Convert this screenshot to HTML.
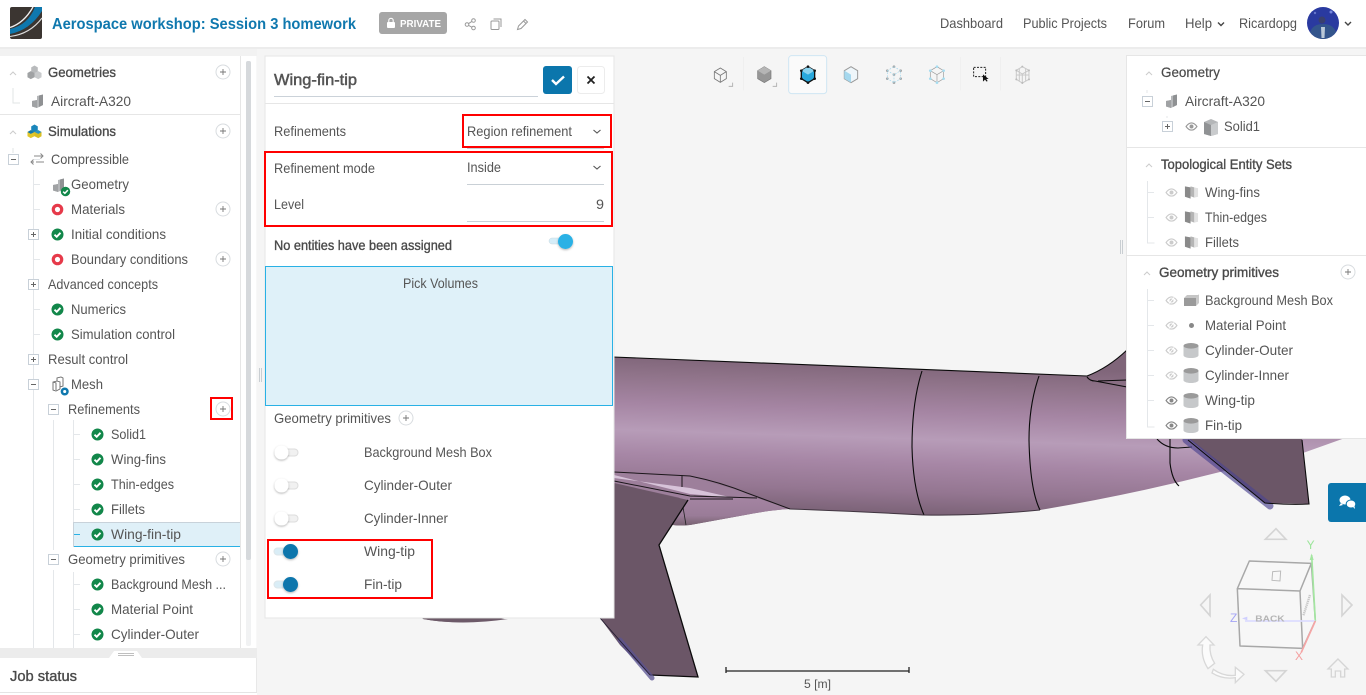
<!DOCTYPE html>
<html lang="en"><head><meta charset="utf-8"><title>Aerospace workshop: Session 3 homework</title>
<style>
html,body{margin:0;padding:0;width:1366px;height:695px;overflow:hidden;background:#f5f5f5}
svg{display:block}
text{font-family:"Liberation Sans",sans-serif;font-size:14px;fill:#555}
.b{font-weight:bold}
.d{fill:#4a4a4a}
.s{fill:#4a4a4a;stroke:#4a4a4a;stroke-width:.35px}
</style></head><body>
<svg xmlns="http://www.w3.org/2000/svg" width="1366" height="695" viewBox="0 0 1366 695">
<defs>
<linearGradient id="fus" gradientUnits="userSpaceOnUse" x1="860" y1="362" x2="855" y2="522">
<stop offset="0" stop-color="#7f6579"/><stop offset=".12" stop-color="#8f7389"/><stop offset=".3" stop-color="#a585a3"/><stop offset=".47" stop-color="#b79cb8"/><stop offset=".62" stop-color="#a787a6"/><stop offset=".8" stop-color="#947691"/><stop offset=".93" stop-color="#7d6479"/><stop offset="1" stop-color="#54434f"/>
</linearGradient>
<linearGradient id="und" gradientUnits="userSpaceOnUse" x1="730" y1="496" x2="730" y2="526">
<stop offset="0" stop-color="#a585a3"/><stop offset=".65" stop-color="#9a7c98"/><stop offset="1" stop-color="#75606f"/>
</linearGradient>
<symbol id="ok" viewBox="0 0 14 14" overflow="visible"><circle cx="7" cy="7" r="6" fill="#12874a"/><path d="M4 7.200l2.200 2.100L10 5.300" fill="none" stroke="#fff" stroke-width="1.900"/></symbol>
<symbol id="ring" viewBox="0 0 14 14"><circle cx="7" cy="7" r="4.200" fill="none" stroke="#e63a4a" stroke-width="3.200"/></symbol>
<symbol id="pl" viewBox="0 0 16 16"><circle cx="8" cy="8" r="7" fill="#fff" stroke="#d8dcdf"/><path d="M5 8h6M8 5v6" stroke="#777" stroke-width=".9"/></symbol>
<symbol id="ep" viewBox="0 0 11 11"><rect x=".5" y=".5" width="10" height="10" fill="#fff" stroke="#c8d0d8"/><path d="M3 5.500h5M5.500 3v5" stroke="#666"/></symbol>
<symbol id="em" viewBox="0 0 11 11"><rect x=".5" y=".5" width="10" height="10" fill="#fff" stroke="#c8d0d8"/><path d="M3 5.500h5" stroke="#666"/></symbol>
<symbol id="eye" viewBox="0 0 14 10"><path d="M1 5C3 2 5 1 7 1s4 1 6 4c-2 3-4 4-6 4S3 8 1 5z" fill="none" stroke="currentColor" stroke-width="1.300"/><circle cx="7" cy="5" r="2.200" fill="currentColor"/></symbol>
<symbol id="eyex" viewBox="0 0 14 10"><path d="M1 5C3 2 5 1 7 1s4 1 6 4c-2 3-4 4-6 4S3 8 1 5z" fill="none" stroke="#ccc" stroke-width="1.300"/><circle cx="7" cy="5" r="2.200" fill="#ccc"/><path d="M4 8.500L10 1.500" stroke="#fff" stroke-width="1"/></symbol>
<symbol id="cyl" viewBox="0 0 16 16"><path d="M0 3v10c0 1.700 3.600 3 8 3s8-1.300 8-3V3z" fill="#c6c8ca"/><ellipse cx="8" cy="3" rx="8" ry="3" fill="#9a9a9a"/></symbol>
<symbol id="part" viewBox="0 0 14 14"><path d="M6 2l6-1.500V11l-6 3-5-1.500V7l5-1z" fill="#b5b7b9"/><path d="M8 1.500l4-1V11l-4 2z" fill="#8f9193"/><path d="M1 7l5-1v8l-5-1.500z" fill="#a0a2a4"/></symbol>
<symbol id="faces" viewBox="0 0 16 14"><path d="M1 1l6 1v12l-6-2z" fill="#8a8a8a"/><path d="M7 1l4 1v11l-4-1.500z" fill="#b5b5b5"/><path d="M11 2l4 1v9l-4 1z" fill="#e2e2e2"/></symbol>
<symbol id="cubes" viewBox="0 0 16 16"><path d="M4.500 2.500L8 .5l3.500 2V7L8 9 4.500 7z" fill="#b8babc"/><path d="M.5 8.500L4 6.500l4 2V13l-4 2-3.500-2z" fill="#a0a2a4"/><path d="M8 8.500l4-2 3.500 2V13L12 15l-4-2z" fill="#c8cacc"/></symbol>
<symbol id="cubesc" viewBox="0 0 16 16"><path d="M4.500 2.500L8 .5l3.500 2V7L8 9 4.500 7z" fill="#1a86bb"/><path d="M.5 8.500L4 6.500l4 2V13l-4 2-3.500-2z" fill="#e2c62a"/><path d="M8 8.500l4-2 3.500 2V13L12 15l-4-2z" fill="#d9bf22"/><path d="M.5 8.500L4 10.500l4-2-4-2z" fill="#0f78ae"/><path d="M8 8.500l4 2 3.500-2-3.500-2z" fill="#2a94c6"/></symbol>
<filter id="sh" x="-50%" y="-50%" width="200%" height="200%"><feDropShadow dx="0" dy="1" stdDeviation="1" flood-color="#000" flood-opacity=".3"/></filter>
<filter id="bl" x="-5%" y="-5%" width="110%" height="110%"><feGaussianBlur stdDeviation=".35"/></filter>
</defs>

<!-- viewport -->
<rect width="1366" height="695" fill="#f5f5f5"/>

<!-- aircraft -->
<g>
<path d="M400 356L613 357L1087 376Q1108 368 1127 350L1345 345V438L1303 453L1220 472Q1130 495 1040 510Q980 516 923 515Q850 511 790 509Q770 510 745 515L690 525Q680 526 673 525L620 520L600 618H508Q460 626 423 619L400 600Z" fill="url(#fus)"/>
<path d="M680 495L757 498L790 509Q770 510 745 515L690 525Q680 526 673 525Z" fill="url(#und)"/>
<g fill="none" stroke="#0a0a0a" stroke-width="1.100">
<path d="M613 357L1087 376Q1108 368 1127 350"/>
<path d="M922 371Q912 402 912 447Q913 490 924 515"/>
<path d="M1039 376Q1029 405 1029 440Q1030 490 1040 510"/>
<path d="M1087 377Q1090 381 1095 381L1127 387M1098 381L1127 380"/>
<path d="M1170 438V463Q1172 480 1179 486"/>
<path d="M1157 439Q1165 448 1178 448L1192 447"/>
</g>
<path d="M790 509Q850 511 923 515Q980 516 1040 510" fill="none" stroke="#403540" stroke-width="1"/>
<path d="M423 619Q460 626 508 619" fill="#6d5a69"/>
<!-- wing fairing -->
<path d="M614 472L682 475L690 476L747 493L790 509L760 498L694 495L690 500L614 483Z" fill="#9d7f9b"/>
<path d="M614 475L690 494L734 498L690 488L614 478Z" fill="#d7c3d9"/>
<path d="M614 472L690 476Q720 482 747 493L790 509M682 475V487M614 481L690 496L757 498M690 499H733" fill="none" stroke="#1b161a" stroke-width="1"/>
<path d="M683 507L686 525" stroke="#222" stroke-width=".8"/>
<!-- main wing -->
<path d="M614 483L688 500L659 545L698 677L650 675L620 645L600 618V480Z" fill="#6b5667"/>
<path d="M688 500L659 545L698 677L650 675" fill="none" stroke="#0b0a0b" stroke-width="1.300"/>
<path d="M620 640L652 678" stroke="#5a5392" stroke-width="5" stroke-linecap="round" opacity=".75"/>
<path d="M600 618L650 675" stroke="#1f1a2e" stroke-width=".8"/>
<!-- tail fin -->
<path d="M1188 438L1265 503L1309 504L1302 438Z" fill="#6b5667"/>
<path d="M1186 440L1270 506" stroke="#4c4490" stroke-width="7" stroke-linecap="round" opacity=".65"/>
<path d="M1188 440L1265 503Q1290 505 1309 504L1302 440" fill="none" stroke="#0b0a0b" stroke-width="1.100"/>
</g>

<!-- scale -->
<path d="M726 667v6M909 667v6M726 671H909" stroke="#222" stroke-width="1.300" fill="none"/>
<text x="804" y="688" textLength="27" lengthAdjust="spacingAndGlyphs" style="font-size:12px">5 [m]</text>

<!-- toolbar -->
<g transform="translate(690 49) scale(.3333)">
<rect x="296" y="20" width="114" height="114" rx="9" fill="#fafafa" stroke="#cfe6f3" stroke-width="3"/>
<path d="M160 24v100M812 24v100M932 24v100" stroke="#ececec" stroke-width="2"/>
<g fill="none" stroke="#777" stroke-width="2.500"><path d="M91 57l18 11v21l-18 11-18-11V68zM73 68l18 11 18-11M91 79v21"/><path d="M116 112h12V101M248 112h12V101" stroke="#aaa"/></g>
<path d="M223 53l20 12v24l-20 12-20-12V65z" fill="#969696" stroke="#777" stroke-width="2"/><path d="M203 65l20 12 20-12-20-12z" fill="#b5b5b5"/>
<path d="M354 53l20 12v24l-20 12-20-12V65z" fill="#29a8dc" stroke="#111" stroke-width="4"/><path d="M334 65l20 12 20-12-20-12z" fill="#8ad3ef"/>
<g fill="#111"><circle cx="354" cy="53" r="4"/><circle cx="334" cy="65" r="4"/><circle cx="374" cy="65" r="4"/><circle cx="334" cy="89" r="4"/><circle cx="374" cy="89" r="4"/><circle cx="354" cy="101" r="4"/></g>
<path d="M483 53l20 12v24l-20 12-20-12V65z" fill="#eef6fa" stroke="#999" stroke-width="3"/><path d="M463 65l20 12v24l-20-12z" fill="#a5d8ee"/>
<g fill="#a5a5a5"><circle cx="612" cy="53" r="4"/><circle cx="592" cy="65" r="4"/><circle cx="632" cy="65" r="4"/><circle cx="592" cy="89" r="4"/><circle cx="632" cy="89" r="4"/><circle cx="612" cy="101" r="4"/><circle cx="612" cy="77" r="4"/></g>
<path d="M612 53l20 12v24l-20 12-20-12V65zM592 65l20 12 20-12M612 77v24" fill="none" stroke="#9fd6ec" stroke-width="2" stroke-dasharray="5 4"/>
<path d="M741 53l20 12v24l-20 12-20-12V65zM721 65l20 12 20-12M741 77v24" fill="none" stroke="#999" stroke-width="2"/>
<g fill="#a5dcf0"><circle cx="741" cy="53" r="4"/><circle cx="721" cy="65" r="4"/><circle cx="761" cy="65" r="4"/><circle cx="721" cy="89" r="4"/><circle cx="761" cy="89" r="4"/><circle cx="741" cy="101" r="4"/></g>
<rect x="851" y="55" width="36" height="28" fill="none" stroke="#222" stroke-width="3" stroke-dasharray="6 4"/>
<path d="M879 76v22l6-6 5 6 3-2-4-6h7z" fill="#111"/>
<g fill="none" stroke="#c9c9c9" stroke-width="3"><path d="M997 53l20 11v27l-20 11-18-11V64zM979 64l18 11 20-11M997 75v27M988 58v38M1007 58v38M979 78l38 0"/></g>
<g fill="#bbb"><circle cx="997" cy="53" r="3"/><circle cx="979" cy="64" r="3"/><circle cx="1017" cy="64" r="3"/><circle cx="979" cy="91" r="3"/><circle cx="1017" cy="91" r="3"/><circle cx="997" cy="102" r="3"/></g>
</g>

<!-- header -->
<rect width="1366" height="47" fill="#fff"/><rect y="47" width="1366" height="2" fill="#ececec"/>
<rect x="10" y="7" width="32" height="32" rx="2" fill="#3b3531"/>
<path d="M10 29Q28 25 35 7H42V11Q30 30 10 34Z" fill="#0f78ae"/>
<path d="M10 27.500Q24 23 33 7" fill="none" stroke="#eee" stroke-width="1.300"/>
<path d="M10 36.500Q30 34 42 18" fill="none" stroke="#ddd" stroke-width="1.100"/>
<text x="52" y="29" textLength="304" lengthAdjust="spacingAndGlyphs" class="b" style="font-size:15.500px;fill:#0f78ae">Aerospace workshop: Session 3 homework</text>
<rect x="379" y="12" width="68" height="22" rx="3" fill="#a6a6a6"/>
<rect x="387" y="22" width="8" height="6" rx="1" fill="#fff"/><path d="M388.800 22v-1.500a2.200 2.200 0 0 1 4.400 0V22" fill="none" stroke="#fff" stroke-width="1.100"/>
<text x="400" y="27" textLength="41" lengthAdjust="spacingAndGlyphs" class="b" style="font-size:10.500px;fill:#fff">PRIVATE</text>
<g fill="none" stroke="#999" stroke-width="1">
<circle cx="467" cy="24.500" r="1.800"/><circle cx="473.500" cy="20.500" r="1.800"/><circle cx="473.500" cy="28" r="1.800"/><path d="M468.600 23.600l3.300-2.200M468.600 25.400l3.300 1.800"/>
<rect x="491" y="21" width="8" height="8.500" rx="1"/><path d="M493.500 19h7.500v8"/>
<path d="M517.500 29.500l1-3.500 6.500-6.500 2.500 2.500-6.500 6.500zM523.500 21l2.500 2.500"/>
</g>
<text x="940" y="28" textLength="63" lengthAdjust="spacingAndGlyphs">Dashboard</text>
<text x="1023" y="28" textLength="84" lengthAdjust="spacingAndGlyphs">Public Projects</text>
<text x="1128" y="28" textLength="37" lengthAdjust="spacingAndGlyphs">Forum</text>
<text x="1185" y="28" textLength="27" lengthAdjust="spacingAndGlyphs">Help</text>
<path d="M1218 22.500l3 3 3-3M1345 22l3 3 3-3" fill="none" stroke="#444" stroke-width="1.400"/>
<text x="1239" y="28" textLength="58" lengthAdjust="spacingAndGlyphs">Ricardopg</text>
<circle cx="1323" cy="23" r="16" fill="#2a3aa0"/>
<path d="M1310 32q3-8 13-8t13 8q-5 7-13 7t-13-7z" fill="#33558c"/><circle cx="1322" cy="20" r="3.500" fill="#39406e"/><path d="M1321 27h4l-.5 11h-3z" fill="#b9c8d8"/><circle cx="1331" cy="12" r="1.500" fill="#7788dd"/><circle cx="1315" cy="13" r="1.200" fill="#6676cc"/>

<!-- left panel -->
<rect x="0" y="49" width="257" height="609" fill="#f2f2f2"/>
<rect x="0" y="56" width="256.500" height="592" fill="#fff"/>
<path d="M240.500 56V648" stroke="#e6e6e6"/>
<rect x="246" y="61" width="5" height="585" rx="2" fill="#f1f2f3"/><rect x="246" y="61" width="5" height="499" rx="2" fill="#d6d9dc"/>
<path d="M0 114.500H240" stroke="#e6e6e6"/>
<path d="M10 75l3-3 3 3M10 134l3-3 3 3" fill="none" stroke="#ccc" stroke-width="1"/>
<path d="M13 88v15h7M13 148v5" fill="none" stroke="#e2e4e6"/>

<g fill="none" stroke="#e4e7ea">
<path d="M33.500 170V648M53.500 420V550M53.500 570V648M73.500 420V522M73.500 572V648M34 184.500h6M34 209.500h6M34 259.500h6M34 309.500h6M34 334.500h6M74 434.500h6M74 459.500h6M74 484.500h6M74 509.500h6M74 584.500h6M74 609.500h6M74 634.500h6M34 159.500h6"/>
</g>
<rect x="73" y="522" width="167" height="25" fill="#dff0f8"/>
<path d="M73 522.500H240" stroke="#c8d2da"/><path d="M73 546.500H240" stroke="#29b1e5"/><path d="M73.500 522v25" stroke="#c8d2da"/><path d="M74 534.500h6" stroke="#29b1e5"/>

<use href="#cubes" x="27" y="65" width="15" height="15"/><use href="#part" x="31" y="94" width="14" height="14"/><use href="#cubesc" x="27" y="124" width="15" height="15"/>
<text x="48" y="77" textLength="68" lengthAdjust="spacingAndGlyphs" class="s">Geometries</text>
<text x="51" y="106" textLength="80" lengthAdjust="spacingAndGlyphs">Aircraft-A320</text>
<text x="48" y="136" textLength="68" lengthAdjust="spacingAndGlyphs" class="s">Simulations</text>
<use href="#pl" x="215" y="64" width="16" height="16"/><use href="#pl" x="215" y="123" width="16" height="16"/><use href="#pl" x="215" y="201" width="16" height="16"/><use href="#pl" x="215" y="251" width="16" height="16"/><use href="#pl" x="215" y="401" width="16" height="16"/><use href="#pl" x="215" y="551" width="16" height="16"/>
<use href="#em" x="8" y="154" width="11" height="11"/>
<path d="M34 156h9M40.500 153.500l2.500 2.500-2.500 2.500M31 162h3M36 162h8M33.500 159.500L31 162l2.500 2.500" fill="none" stroke="#888" stroke-width="1"/>
<text x="51" y="164" textLength="78" lengthAdjust="spacingAndGlyphs">Compressible</text>
<use href="#part" x="52" y="178" width="14" height="14"/><use href="#ok" x="60" y="186" width="11" height="11"/>
<text x="71" y="189" textLength="58" lengthAdjust="spacingAndGlyphs">Geometry</text>
<use href="#ring" x="50.500" y="202.500" width="14" height="14"/><text x="71" y="214" textLength="54" lengthAdjust="spacingAndGlyphs">Materials</text>
<use href="#ep" x="28" y="229" width="11" height="11"/><use href="#ok" x="50.500" y="227.500" width="14" height="14"/><text x="71" y="239" textLength="95" lengthAdjust="spacingAndGlyphs">Initial conditions</text>
<use href="#ring" x="50.500" y="252.500" width="14" height="14"/><text x="71" y="264" textLength="117" lengthAdjust="spacingAndGlyphs">Boundary conditions</text>
<use href="#ep" x="28" y="279" width="11" height="11"/><text x="48" y="289" textLength="110" lengthAdjust="spacingAndGlyphs">Advanced concepts</text>
<use href="#ok" x="50.500" y="302.500" width="14" height="14"/><text x="71" y="314" textLength="55" lengthAdjust="spacingAndGlyphs">Numerics</text>
<use href="#ok" x="50.500" y="327.500" width="14" height="14"/><text x="71" y="339" textLength="104" lengthAdjust="spacingAndGlyphs">Simulation control</text>
<use href="#ep" x="28" y="354" width="11" height="11"/><text x="48" y="364" textLength="80" lengthAdjust="spacingAndGlyphs">Result control</text>
<use href="#em" x="28" y="379" width="11" height="11"/>
<path d="M53 382l4-1v-3l4-1 2 1v8l-3 1v2l-4 2-3-1zM57 381l3 1v5M53 382l3 1v7" fill="none" stroke="#666" stroke-width=".9"/>
<circle cx="64.700" cy="391.500" r="2.800" fill="#fff" stroke="#0f78ae" stroke-width="2.500"/>
<text x="71" y="389" textLength="32" lengthAdjust="spacingAndGlyphs">Mesh</text>
<use href="#em" x="48" y="404" width="11" height="11"/><text x="68" y="414" textLength="72" lengthAdjust="spacingAndGlyphs">Refinements</text>
<use href="#ok" x="90.500" y="427.500" width="14" height="14"/><text x="111" y="439" textLength="35" lengthAdjust="spacingAndGlyphs">Solid1</text>
<use href="#ok" x="90.500" y="452.500" width="14" height="14"/><text x="111" y="464" textLength="55" lengthAdjust="spacingAndGlyphs">Wing-fins</text>
<use href="#ok" x="90.500" y="477.500" width="14" height="14"/><text x="111" y="489" textLength="63" lengthAdjust="spacingAndGlyphs">Thin-edges</text>
<use href="#ok" x="90.500" y="502.500" width="14" height="14"/><text x="111" y="514" textLength="34" lengthAdjust="spacingAndGlyphs">Fillets</text>
<use href="#ok" x="90.500" y="527.500" width="14" height="14"/><text x="111" y="539" textLength="70" lengthAdjust="spacingAndGlyphs">Wing-fin-tip</text>
<use href="#em" x="48" y="554" width="11" height="11"/><text x="68" y="564" textLength="117" lengthAdjust="spacingAndGlyphs">Geometry primitives</text>
<use href="#ok" x="90.500" y="577.500" width="14" height="14"/><text x="111" y="589" textLength="115" lengthAdjust="spacingAndGlyphs">Background Mesh ...</text>
<use href="#ok" x="90.500" y="602.500" width="14" height="14"/><text x="111" y="614" textLength="82" lengthAdjust="spacingAndGlyphs">Material Point</text>
<use href="#ok" x="90.500" y="627.500" width="14" height="14"/><text x="111" y="639" textLength="88" lengthAdjust="spacingAndGlyphs">Cylinder-Outer</text>

<rect x="0" y="648" width="257" height="10" fill="#ececec"/>
<path d="M109 658l5-7h23l5 7z" fill="#fff"/><path d="M118 653.500h16M118 655.500h16" stroke="#aaa" stroke-width=".8"/>
<rect x="0" y="658" width="257" height="37" fill="#fff"/>
<path d="M0 692.500H257" stroke="#e4e4e4"/><path d="M256.500 658V692" stroke="#e8e8e8"/>
<text x="10" y="681" textLength="67" lengthAdjust="spacingAndGlyphs" class="s" style="font-size:14.500px">Job status</text>
<path d="M259.500 368v14M261.500 368v14" stroke="#c9ced2"/>

<!-- dialog -->
<rect x="265" y="56" width="349" height="562" fill="#fff" stroke="#e6e6e6"/>
<path d="M265 103.500H614" stroke="#e6e6e6"/><path d="M274 96.500H538" stroke="#cbd2d9"/>
<text x="274" y="85" textLength="83" lengthAdjust="spacingAndGlyphs" class="s" style="font-size:16px;stroke-width:.5px;fill:#555;stroke:#555">Wing-fin-tip</text>
<rect x="543" y="66" width="29" height="28" rx="3" fill="#0b76ac"/><path d="M552 80l4 4 8-7.500" fill="none" stroke="#fff" stroke-width="2.400"/>
<rect x="577.500" y="66.500" width="27" height="27" rx="3" fill="#fff" stroke="#ececec"/><path d="M587.500 76.500l7 7M594.500 76.500l-7 7" stroke="#222" stroke-width="1.800"/>
<text x="274" y="136" textLength="72" lengthAdjust="spacingAndGlyphs">Refinements</text>
<text x="467" y="136" textLength="105" lengthAdjust="spacingAndGlyphs">Region refinement</text>
<text x="274" y="173" textLength="101" lengthAdjust="spacingAndGlyphs">Refinement mode</text>
<text x="467" y="172" textLength="34" lengthAdjust="spacingAndGlyphs">Inside</text>
<text x="274" y="209" textLength="30" lengthAdjust="spacingAndGlyphs">Level</text>
<text x="596" y="209" textLength="8" lengthAdjust="spacingAndGlyphs">9</text>
<path d="M593.500 130l3.500 3 3.500-3M593.500 166l3.500 3 3.500-3" fill="none" stroke="#555" stroke-width="1.100"/>
<path d="M467 148.500H604M467 184.500H604M467 221.500H604" stroke="#c9d0d6"/>
<text x="274" y="250" textLength="178" lengthAdjust="spacingAndGlyphs" class="s">No entities have been assigned</text>
<rect x="549" y="238" width="14" height="6" rx="3" fill="#d5edf8" stroke="#c9d8df" stroke-width=".5"/><circle cx="565.500" cy="241.500" r="7.500" fill="#29b1e5" filter="url(#sh)"/>
<rect x="265.500" y="266.500" width="347" height="139" fill="#dff1f9" stroke="#29b1e5"/>
<text x="403" y="288" textLength="75" lengthAdjust="spacingAndGlyphs">Pick Volumes</text>
<text x="274" y="423" textLength="117" lengthAdjust="spacingAndGlyphs">Geometry primitives</text>
<use href="#pl" x="398" y="410" width="16" height="16"/>

<g>
<rect x="282" y="449" width="16" height="7" rx="3.500" fill="#f1f1f1" stroke="#ddd"/><circle cx="281.500" cy="452.500" r="7" fill="#fff" filter="url(#sh)"/>
<rect x="282" y="482" width="16" height="7" rx="3.500" fill="#f1f1f1" stroke="#ddd"/><circle cx="281.500" cy="485.500" r="7" fill="#fff" filter="url(#sh)"/>
<rect x="282" y="515" width="16" height="7" rx="3.500" fill="#f1f1f1" stroke="#ddd"/><circle cx="281.500" cy="518.500" r="7" fill="#fff" filter="url(#sh)"/>
<rect x="274" y="548" width="16" height="7" rx="3.500" fill="#d9edf6" stroke="#dde6ea"/><circle cx="290.500" cy="551.500" r="7.500" fill="#0b76ac" filter="url(#sh)"/>
<rect x="274" y="581" width="16" height="7" rx="3.500" fill="#d9edf6" stroke="#dde6ea"/><circle cx="290.500" cy="584.500" r="7.500" fill="#0b76ac" filter="url(#sh)"/>
</g>
<text x="364" y="457" textLength="128" lengthAdjust="spacingAndGlyphs">Background Mesh Box</text>
<text x="364" y="490" textLength="88" lengthAdjust="spacingAndGlyphs">Cylinder-Outer</text>
<text x="364" y="523" textLength="84" lengthAdjust="spacingAndGlyphs">Cylinder-Inner</text>
<text x="364" y="556" textLength="51" lengthAdjust="spacingAndGlyphs">Wing-tip</text>
<text x="364" y="589" textLength="38" lengthAdjust="spacingAndGlyphs">Fin-tip</text>

<!-- right panel -->
<rect x="1126.500" y="55.500" width="240" height="383" fill="#fff" stroke="#e6e6e6"/>
<path d="M1127 147.500H1366M1127 255.500H1366" stroke="#e6e6e6"/>
<path d="M1146 75l3-3 3 3M1146 167l3-3 3 3M1144 275l3-3 3 3" fill="none" stroke="#ccc"/>
<path d="M1147 90v3M1167 116v2M1147.500 181V243h7M1148 192.500h6M1148 217.500h6M1147.500 289V427h7M1148 300.500h6M1148 325.500h6M1148 350.500h6M1148 375.500h6M1148 400.500h6" fill="none" stroke="#e4e7ea"/>
<text x="1161" y="77" textLength="59" lengthAdjust="spacingAndGlyphs" class="s" style="stroke-width:.2px">Geometry</text>
<use href="#em" x="1142" y="96" width="11" height="11"/><use href="#part" x="1165" y="94" width="14" height="14"/>
<text x="1185" y="106" textLength="80" lengthAdjust="spacingAndGlyphs">Aircraft-A320</text>
<use href="#ep" x="1162" y="121" width="11" height="11"/><use href="#eye" x="1185" y="122" width="13" height="9" style="color:#999"/>
<path d="M1211 119l7 3v12l-7 2-7-2v-12z" fill="#b4b6b8"/><path d="M1204 122l7 3v11l-7-2z" fill="#909294"/><path d="M1218 122l-7 3v11l7-2z" fill="#c9cbcd"/>
<text x="1224" y="131" textLength="36" lengthAdjust="spacingAndGlyphs">Solid1</text>
<text x="1161" y="169" textLength="131" lengthAdjust="spacingAndGlyphs" class="s">Topological Entity Sets</text>
<use href="#eye" x="1165" y="188" width="13" height="9" style="color:#ccc"/><use href="#faces" x="1184" y="185" width="15" height="14"/><text x="1205" y="197" textLength="55" lengthAdjust="spacingAndGlyphs">Wing-fins</text>
<use href="#eye" x="1165" y="213" width="13" height="9" style="color:#ccc"/><use href="#faces" x="1184" y="210" width="15" height="14"/><text x="1205" y="222" textLength="62" lengthAdjust="spacingAndGlyphs">Thin-edges</text>
<use href="#eye" x="1165" y="238" width="13" height="9" style="color:#ccc"/><use href="#faces" x="1184" y="235" width="15" height="14"/><text x="1205" y="247" textLength="34" lengthAdjust="spacingAndGlyphs">Fillets</text>
<text x="1159" y="277" textLength="120" lengthAdjust="spacingAndGlyphs" class="s">Geometry primitives</text>
<use href="#pl" x="1340" y="264" width="16" height="16"/>
<use href="#eyex" x="1165" y="296" width="13" height="9"/><path d="M1184 298h12v8h-12z" fill="#9a9a9a"/><path d="M1196 298l3-4v9l-3 3z" fill="#c9c9c9"/><path d="M1184 298l3-3h12l-3 3z" fill="#c5c5c5"/>
<text x="1205" y="305" textLength="128" lengthAdjust="spacingAndGlyphs">Background Mesh Box</text>
<use href="#eyex" x="1165" y="321" width="13" height="9"/><circle cx="1191.500" cy="325.500" r="2.500" fill="#888"/><text x="1205" y="330" textLength="81" lengthAdjust="spacingAndGlyphs">Material Point</text>
<use href="#eyex" x="1165" y="346" width="13" height="9"/><use href="#cyl" x="1183" y="343" width="16" height="15"/><text x="1205" y="355" textLength="88" lengthAdjust="spacingAndGlyphs">Cylinder-Outer</text>
<use href="#eyex" x="1165" y="371" width="13" height="9"/><use href="#cyl" x="1183" y="368" width="16" height="15"/><text x="1205" y="380" textLength="84" lengthAdjust="spacingAndGlyphs">Cylinder-Inner</text>
<use href="#eye" x="1165" y="396" width="13" height="9" style="color:#888"/><use href="#cyl" x="1183" y="393" width="16" height="15"/><text x="1205" y="405" textLength="50" lengthAdjust="spacingAndGlyphs">Wing-tip</text>
<use href="#eye" x="1165" y="421" width="13" height="9" style="color:#888"/><use href="#cyl" x="1183" y="418" width="16" height="15"/><text x="1205" y="430" textLength="37" lengthAdjust="spacingAndGlyphs">Fin-tip</text>
<path d="M1120.500 240v14M1122.500 240v14" stroke="#c9ced2"/>

<!-- chat -->
<path d="M1366 483h-35a3 3 0 0 0-3 3v33a3 3 0 0 0 3 3h35z" fill="#0b76ac"/>
<ellipse cx="1345" cy="500" rx="5.500" ry="4.500" fill="#fff"/><path d="M1341 503l-2 3 4-1z" fill="#fff"/><ellipse cx="1351" cy="504" rx="4.800" ry="4" fill="#fff" stroke="#0b76ac"/><path d="M1353 507l2 2-.5-3z" fill="#fff"/>

<!-- gizmo -->
<g transform="translate(1180 510) scale(.3333)" filter="url(#bl)">
<path d="M288 56l30 32h-62z" fill="none" stroke="#d5d5d5" stroke-width="5"/>
<path d="M288 514l30-32h-62z" fill="none" stroke="#d5d5d5" stroke-width="5"/>
<path d="M62 285l28-30v62z" fill="none" stroke="#d5d5d5" stroke-width="5"/>
<path d="M516 285l-30-30v62z" fill="none" stroke="#d5d5d5" stroke-width="5"/>
<path d="M172 236l36-83 186 7-34 83zM172 236l188 7 8 172-188-7zM360 243l34-83 12 172-38 83" fill="#f7f7f7" stroke="#a8a8a8" stroke-width="4.500" stroke-linejoin="round"/>
<path d="M278 185l24-2 -2 30-24-2z" fill="none" stroke="#bbb" stroke-width="3"/>
<path d="M390 255l-20 62" stroke="#c8c8c8" stroke-width="7" stroke-dasharray="4 2"/>
<path d="M395 135l11 198" stroke="#a3e6a0" stroke-width="5"/><path d="M395 130l6 20h-12z" fill="#a3e6a0"/>
<path d="M406 333H195" stroke="#dcdcff" stroke-width="5"/><path d="M186 325l16 -5v11z" fill="#d0d0ff"/>
<path d="M406 333l-42 94" stroke="#f5a5a5" stroke-width="5"/>
<text x="380" y="117" style="font-size:36px;fill:#9be59a">Y</text>
<text x="150" y="336" style="font-size:36px;fill:#a5a5f5">Z</text>
<text x="345" y="450" style="font-size:36px;fill:#f4a0a0">X</text>
<text x="226" y="334" textLength="88" lengthAdjust="spacingAndGlyphs" class="b" style="font-size:25px;fill:#b5b5b5">BACK</text>
<path d="M78 380l24 25h-12q-2 30 14 55l-20 16q-22-34-16-71H54z" fill="#fbfbfb" stroke="#d8d8d8" stroke-width="4"/>
<path d="M100 478q30 22 66 18v-24l26 21-26 25v-15q-38 6-70-14z" fill="#fbfbfb" stroke="#d8d8d8" stroke-width="4"/>
<path d="M474 447l30 30h-10v24h-12v-18h-16v18h-12v-24h-10z" fill="none" stroke="#d5d5d5" stroke-width="4"/>
</g>

<!-- red annotations -->
<g fill="none" stroke="#f00" stroke-width="2">
<rect x="463" y="115" width="148" height="32"/>
<rect x="265" y="152" width="347" height="74"/>
<rect x="211" y="398" width="21" height="21"/>
<rect x="268" y="540" width="164" height="58"/>
</g>
</svg>
</body></html>
